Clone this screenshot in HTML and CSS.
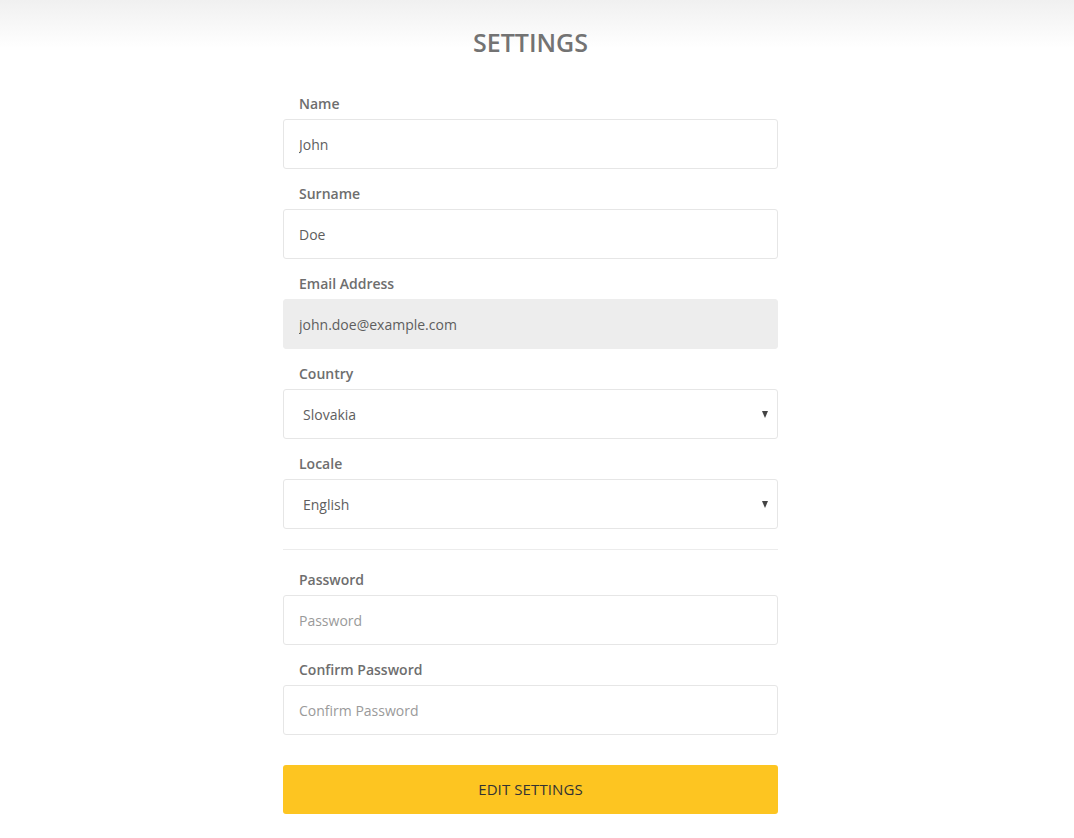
FILE: index.html
```html
<!DOCTYPE html>
<html lang="en">
<head>
<meta charset="utf-8">
<title>Settings</title>
<link rel="stylesheet" href="styles.css">
</head>
<body>
<div class="page">
  <header class="top">
    <h1 class="title">SETTINGS</h1>
  </header>
  <form class="form">
    <div class="field">
      <label class="label">Name</label>
      <input class="input" type="text" value="John">
    </div>
    <div class="field">
      <label class="label">Surname</label>
      <input class="input" type="text" value="Doe">
    </div>
    <div class="field">
      <label class="label">Email Address</label>
      <input class="input input-disabled" type="text" value="john.doe@example.com" readonly>
    </div>
    <div class="field">
      <label class="label">Country</label>
      <div class="select-wrap">
        <select class="input select">
          <option>Slovakia</option>
        </select>
      </div>
    </div>
    <div class="field">
      <label class="label">Locale</label>
      <div class="select-wrap">
        <select class="input select">
          <option>English</option>
        </select>
      </div>
    </div>
    <hr class="divider">
    <div class="field">
      <label class="label">Password</label>
      <input class="input" type="password" placeholder="Password">
    </div>
    <div class="field">
      <label class="label">Confirm Password</label>
      <input class="input" type="password" placeholder="Confirm Password">
    </div>
    <button class="btn" type="button">EDIT SETTINGS</button>
  </form>
</div>
</body>
</html>
```
FILE: styles.css
```css
* { box-sizing: border-box; }
html, body { margin: 0; padding: 0; }
body {
  font-family: "Open Sans", "Liberation Sans", sans-serif;
  background: linear-gradient(#f0f0f0 0px, #ffffff 48px) no-repeat;
  background-color: #fff;
  color: #555;
}
.page {
  width: 1061px;
  padding-bottom: 40px;
}
.top {
  padding-top: 24px;
}
.title {
  margin: 0;
  text-align: center;
  font-size: 25px;
  line-height: 36px;
  font-weight: 600;
  color: #737373;
}
.form {
  width: 495px;
  margin: 33px auto 0;
}
.field {
  display: flex;
  flex-direction: column;
  margin-bottom: 14px;
}
.label {
  display: block;
  padding-left: 16px;
  padding-top: 1px;
  font-size: 14px;
  line-height: 20px;
  font-weight: 600;
  color: #6e6e6e;
  margin-bottom: 5px;
}
.input {
  display: block;
  width: 100%;
  height: 50px;
  border: 1px solid #e6e6e6;
  border-radius: 3px;
  padding: 0 15px;
  font-family: "Open Sans", "Liberation Sans", sans-serif;
  font-size: 14px;
  color: #5e5e5e;
  background: #fff;
  outline: none;
}
.input::placeholder { color: #9a9a9a; }
.input-disabled {
  background: #ededed;
  border-color: #ededed;
}
.select-wrap { position: relative; }
.select {
  -webkit-appearance: none;
  appearance: none;
  padding-left: 19px;
}
.select-wrap::after {
  content: "";
  position: absolute;
  right: 10px;
  top: 22px;
  border-left: 3.5px solid transparent;
  border-right: 3.5px solid transparent;
  border-top: 7px solid #444;
}
.divider {
  border: 0;
  border-top: 1px solid #ececec;
  margin: 20px 0 19px;
}
.btn {
  display: block;
  width: 100%;
  height: 49px;
  margin-top: 30px;
  padding: 0 0 2px;
  border: 0;
  border-radius: 3px;
  background: #fdc521;
  color: #333;
  font-family: "Open Sans", "Liberation Sans", sans-serif;
  font-size: 15px;
  letter-spacing: 0.1px;
}
```
